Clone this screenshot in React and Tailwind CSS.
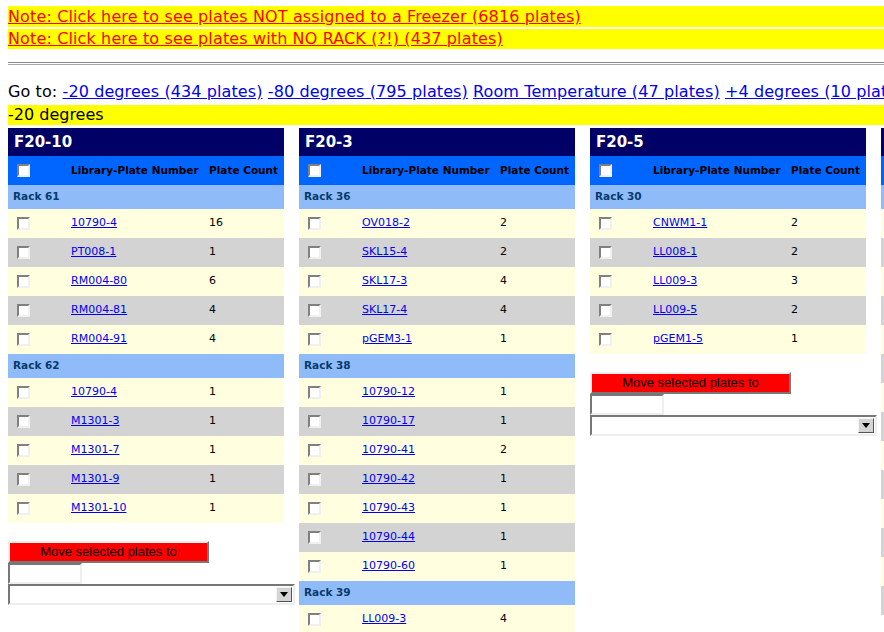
// App.jsx
const freezers = [
  {
    name: "F20-10",
    racks: [
      {
        name: "Rack 61",
        plates: [
          ["10790-4", 16],
          ["PT008-1", 1],
          ["RM004-80", 6],
          ["RM004-81", 4],
          ["RM004-91", 4],
        ],
      },
      {
        name: "Rack 62",
        plates: [
          ["10790-4", 1],
          ["M1301-3", 1],
          ["M1301-7", 1],
          ["M1301-9", 1],
          ["M1301-10", 1],
        ],
      },
    ],
  },
  {
    name: "F20-3",
    racks: [
      {
        name: "Rack 36",
        plates: [
          ["OV018-2", 2],
          ["SKL15-4", 2],
          ["SKL17-3", 4],
          ["SKL17-4", 4],
          ["pGEM3-1", 1],
        ],
      },
      {
        name: "Rack 38",
        plates: [
          ["10790-12", 1],
          ["10790-17", 1],
          ["10790-41", 2],
          ["10790-42", 1],
          ["10790-43", 1],
          ["10790-44", 1],
          ["10790-60", 1],
        ],
      },
      { name: "Rack 39", plates: [["LL009-3", 4]] },
    ],
  },
  {
    name: "F20-5",
    racks: [
      {
        name: "Rack 30",
        plates: [
          ["CNWM1-1", 2],
          ["LL008-1", 2],
          ["LL009-3", 3],
          ["LL009-5", 2],
          ["pGEM1-5", 1],
        ],
      },
    ],
  },
  {
    name: "F20-6",
    racks: [
      {
        name: "Rack 12",
        plates: [
          ["10790-1", 1],
          ["10790-2", 1],
          ["10790-3", 2],
          ["10790-5", 1],
          ["10790-6", 1],
          ["10790-7", 1],
          ["10790-8", 3],
          ["10790-9", 1],
          ["10790-10", 1],
          ["10790-11", 1],
          ["10790-13", 2],
          ["10790-14", 1],
          ["10790-15", 1],
          ["10790-16", 1],
        ],
      },
    ],
  },
];

function Check() {
  return (
    <span className="block w-[13px] h-[13px] bg-white border-2 border-t-[#808080] border-l-[#808080] border-r-[#f0f0f0] border-b-[#f0f0f0]" />
  );
}

function MoveControls() {
  return (
    <div className="mt-[18px] flex flex-col items-start">
      <div className="w-[201px] h-[22px] border-2 border-t-[#eeeeee] border-l-[#eeeeee] border-r-[#777777] border-b-[#777777] bg-[#ff0000] flex items-center justify-center text-[13px] text-black font-['Liberation_Sans',Arial,sans-serif]">
        Move selected plates to
      </div>
      <div className="w-[74px] h-[21px] bg-white border-2 border-t-[#777777] border-l-[#777777] border-r-[#eeeeee] border-b-[#eeeeee]" />
      <div className="w-[287px] h-[21px] bg-white border-2 border-t-[#777777] border-l-[#777777] border-r-[#eeeeee] border-b-[#eeeeee] flex justify-end items-center pr-[1px]">
        <span className="w-[16px] h-[15px] bg-[#d4d4d4] border border-t-[#f4f4f4] border-l-[#f4f4f4] border-r-[#555] border-b-[#555] flex items-center justify-center">
          <span className="block w-0 h-0 border-l-[4px] border-r-[4px] border-t-[5px] border-l-transparent border-r-transparent border-t-black" />
        </span>
      </div>
    </div>
  );
}

function Freezer({ f, controls }) {
  return (
    <div className="w-[276px] shrink-0">
      <div className="h-[28px] bg-[#000066] text-white text-[15px] font-bold pl-[6px] flex items-center">
        {f.name}
      </div>
      <div className="h-[29px] bg-[#0066ff] grid grid-cols-[63px_138px_1fr] items-center text-[10.5px] font-bold text-black">
        <div className="pl-[9px]">
          <Check />
        </div>
        <div className="whitespace-nowrap">Library-Plate Number</div>
        <div className="whitespace-nowrap">Plate Count</div>
      </div>
      {f.racks.map((r) => (
        <div key={r.name}>
          <div className="h-[24px] bg-[#8fbcf8] pl-[5px] flex items-center text-[10.5px] font-bold text-[#073a6c]">
            {r.name}
          </div>
          {r.plates.map(([p, c], i) => (
            <div
              key={p + i}
              className={
                "h-[29px] grid grid-cols-[63px_138px_1fr] items-center text-[11px] " +
                (i % 2 === 0 ? "bg-[#ffffe0]" : "bg-[#d3d3d3]")
              }
            >
              <div className="pl-[9px]">
                <Check />
              </div>
              <div>
                <a href="#" className="text-[#0000ee] underline">
                  {p}
                </a>
              </div>
              <div className="text-black">{c}</div>
            </div>
          ))}
        </div>
      ))}
      {controls && <MoveControls />}
    </div>
  );
}

export default function App() {
  return (
    <div className="w-[884px] h-[632px] overflow-hidden bg-white font-['DejaVu_Sans',Verdana,sans-serif]">
      <div className="w-[1300px] pl-[8px] pt-[6px]">
        <div className="flex flex-col gap-[2px] tracking-[0.13px]">
          <div className="h-[21px] bg-[#ffff00] flex items-center text-[16px]">
            <a href="#" className="text-[#ff0000] underline">
              Note: Click here to see plates NOT assigned to a Freezer (6816 plates)
            </a>
          </div>
          <div className="h-[20px] bg-[#ffff00] flex items-center text-[16px]">
            <a href="#" className="text-[#ff0000] underline">
              Note: Click here to see plates with NO RACK (?!) (437 plates)
            </a>
          </div>
        </div>
        <div className="mt-[13px] h-[3px] border-t border-b border-t-[#8c8c8c] border-b-[#a8a8a8]" />
        <div className="mt-[17px] h-[20px] text-[16px] whitespace-nowrap text-black leading-[20px] tracking-[0.1px]">
          Go to:{" "}
          <a href="#" className="text-[#0000ee] underline">-20 degrees (434 plates)</a>{" "}
          <a href="#" className="text-[#0000ee] underline">-80 degrees (795 plates)</a>{" "}
          <a href="#" className="text-[#0000ee] underline">Room Temperature (47 plates)</a>{" "}
          <a href="#" className="text-[#0000ee] underline">+4 degrees (10 plates)</a>
        </div>
        <div className="mt-[3px] h-[20px] bg-[#ffff00] flex items-center text-[16px] text-black">
          -20 degrees
        </div>
        <div className="mt-[3px] flex items-start gap-[15px]">
          {freezers.map((f, i) => (
            <Freezer key={f.name} f={f} controls={i === 0 || i === 2} />
          ))}
        </div>
      </div>
    </div>
  );
}
